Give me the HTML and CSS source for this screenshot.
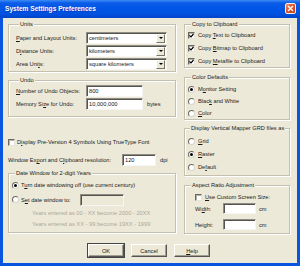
FILE: index.html
```html
<!DOCTYPE html>
<html lang="en">
<head>
    <meta charset="UTF-8">
    <title>System Settings Preferences</title>
    <link rel="stylesheet" href="styles.css">
</head>
<body>
    <div class="window">
        <div class="titlebar">
            <span class="title">System Settings Preferences</span>
            <span class="close">
                <svg width="7" height="7" viewBox="0 0 7 7"><path d="M1 1L6 6M6 1L1 6" stroke="#fff" stroke-width="1.4"/></svg>
            </span>
        </div>
        <div class="frame">
            <div class="columns">
                <div class="col-left">
                    <div class="group units">
                        <div class="group-title">Units</div>
                        <div class="field-row first">
                            <span class="lbl"><u>P</u>aper and Layout Units:</span>
                            <div class="select"><span>centimeters</span><span class="arrow"></span></div>
                        </div>
                        <div class="field-row">
                            <span class="lbl">D<u>i</u>stance Units:</span>
                            <div class="select"><span>kilometers</span><span class="arrow"></span></div>
                        </div>
                        <div class="field-row">
                            <span class="lbl">Area Uni<u>t</u>s:</span>
                            <div class="select"><span>square kilometers</span><span class="arrow"></span></div>
                        </div>
                    </div>

                    <div class="group undo">
                        <div class="group-title">Undo</div>
                        <div class="field-row first">
                            <span class="lbl"><u>N</u>umber of Undo Objects:</span>
                            <div class="input w57">800</div>
                        </div>
                        <div class="field-row">
                            <span class="lbl">Memory Si<u>z</u>e for Undo:</span>
                            <div class="input w57">10,000,000</div>
                            <span class="unit">bytes</span>
                        </div>
                    </div>

                    <div class="check-row symbols">
                        <span class="box"></span>
                        <span>D<u>i</u>splay Pre-Version 4 Symbols Using TrueType Font</span>
                    </div>

                    <div class="field-row resolution">
                        <span class="lbl">Window Ex<u>p</u>ort and C<u>l</u>ipboard resolution:</span>
                        <div class="input w34">120</div>
                        <span class="unit">dpi</span>
                    </div>

                    <div class="group date">
                        <div class="group-title">Date Window for 2-digit Years</div>
                        <div class="check-row first">
                            <span class="radio on"></span>
                            <span>T<u>u</u>rn date windowing off (use current century)</span>
                        </div>
                        <div class="check-row set-row">
                            <span class="radio"></span>
                            <span class="set-lbl">S<u>e</u>t date window to:</span>
                            <div class="input w44 disabled"></div>
                        </div>
                        <div class="gray first-gray">Years entered as 00 - XX become 2000 - 20XX</div>
                        <div class="gray">Years entered as XX - 99 become 19XX - 1999</div>
                    </div>
                </div>

                <div class="col-right">
                    <div class="group clip">
                        <div class="group-title">Copy to Clipboard</div>
                        <div class="check-row first">
                            <span class="box on"><svg width="5" height="5" viewBox="0 0 5 5"><path d="M0.5 2.3L2 3.8L4.5 1" fill="none" stroke="#000" stroke-width="1.2"/></svg></span>
                            <span>Copy <u>T</u>ext to Clipboard</span>
                        </div>
                        <div class="check-row">
                            <span class="box on"><svg width="5" height="5" viewBox="0 0 5 5"><path d="M0.5 2.3L2 3.8L4.5 1" fill="none" stroke="#000" stroke-width="1.2"/></svg></span>
                            <span>Copy <u>B</u>itmap to Clipboard</span>
                        </div>
                        <div class="check-row">
                            <span class="box on"><svg width="5" height="5" viewBox="0 0 5 5"><path d="M0.5 2.3L2 3.8L4.5 1" fill="none" stroke="#000" stroke-width="1.2"/></svg></span>
                            <span>Copy <u>M</u>etafile to Clipboard</span>
                        </div>
                    </div>

                    <div class="group colors">
                        <div class="group-title">Color Defaults</div>
                        <div class="check-row first">
                            <span class="radio on"></span>
                            <span>M<u>o</u>nitor Setting</span>
                        </div>
                        <div class="check-row">
                            <span class="radio"></span>
                            <span>Blac<u>k</u> and White</span>
                        </div>
                        <div class="check-row">
                            <span class="radio"></span>
                            <span><u>C</u>olor</span>
                        </div>
                    </div>

                    <div class="group grd">
                        <div class="group-title">Display Vertical Mapper GRD files as</div>
                        <div class="check-row first">
                            <span class="radio"></span>
                            <span><u>G</u>rid</span>
                        </div>
                        <div class="check-row">
                            <span class="radio on"></span>
                            <span><u>R</u>aster</span>
                        </div>
                        <div class="check-row">
                            <span class="radio"></span>
                            <span>De<u>f</u>ault</span>
                        </div>
                    </div>

                    <div class="group aspect">
                        <div class="group-title">Aspect Ratio Adjustment</div>
                        <div class="check-row first">
                            <span class="box"></span>
                            <span><u>U</u>se Custom Screen Size:</span>
                        </div>
                        <div class="field-row size-row">
                            <span class="lbl">Wi<u>d</u>th:</span>
                            <div class="input w33"></div>
                            <span class="unit">cm</span>
                        </div>
                        <div class="field-row size-row height-row">
                            <span class="lbl">Hei<u>g</u>ht:</span>
                            <div class="input w33"></div>
                            <span class="unit">cm</span>
                        </div>
                    </div>
                </div>
            </div>

            <div class="buttons">
                <div class="btn default">OK</div>
                <div class="btn">Cancel</div>
                <div class="btn"><u>H</u>elp</div>
            </div>
        </div>
    </div>
</body>
</html>
```

FILE: styles.css
```css
* {
    box-sizing: border-box;
}

body {
    margin: 0;
    font-family: "Liberation Sans", Arial, sans-serif;
    font-size: 5.7px;
    color: #1a1a1a;
}

u {
    text-decoration-thickness: 1px;
    text-underline-offset: 1px;
}

.window {
    width: 300px;
    height: 266px;
    display: flex;
    flex-direction: column;
}

.titlebar {
    height: 18px;
    display: flex;
    align-items: center;
    justify-content: space-between;
    padding: 0 4px 1px 5px;
    background: linear-gradient(#3d8bf6 0, #0b5ce8 3px, #0055e6 9px, #0052e0 14px, #0043c9 18px);
}

.title {
    color: #fff;
    font-size: 6.6px;
    font-weight: bold;
    text-shadow: 1px 1px 0 rgba(10, 24, 131, 0.4);
}

.close {
    width: 11px;
    height: 11px;
    display: flex;
    align-items: center;
    justify-content: center;
    border: 1px solid #f4f0ea;
    border-radius: 2px;
    background: linear-gradient(135deg, #f0906a, #e0542a 45%, #c43d14);
}

.frame {
    flex: 1;
    background: #ece9d8;
    border: 3px solid #0a55e0;
    border-top: 0;
    padding: 6px 7px 0 5px;
}

.columns {
    display: flex;
    align-items: flex-start;
    gap: 8px;
}

.col-left {
    width: 168px;
}

.col-right {
    width: 106px;
}

/* group boxes */
.group {
    border: 1px solid #c3c0b0;
    box-shadow: inset 1px 1px 0 #fff, 1px 1px 0 #fff;
}

.group-title {
    width: max-content;
    height: 8px;
    line-height: 8px;
    margin: -5px 0 0 3px;
    padding: 0 1px;
    background: #ece9d8;
    white-space: nowrap;
}

.field-row {
    display: flex;
    align-items: center;
    height: 12px;
}

.field-row + .field-row {
    margin-top: 1px;
}

.check-row {
    display: flex;
    align-items: center;
    gap: 3px;
    height: 12px;
}

.check-row + .check-row {
    margin-top: 1px;
}

/* controls */
.select,
.input {
    height: 12px;
    display: flex;
    align-items: center;
    padding-left: 2px;
    background: #fff;
    border: 1px solid;
    border-color: #8f8d83 #f7f6f2 #f7f6f2 #8f8d83;
    box-shadow: inset 1px 1px 0 #55544e;
    white-space: nowrap;
}

.select {
    width: 81px;
    padding-right: 1px;
}

.select .arrow {
    margin-left: auto;
    width: 9px;
    height: 9px;
    display: flex;
    align-items: center;
    justify-content: center;
    background: #ece9d8;
    border: 1px solid;
    border-color: #fff #77756b #77756b #fff;
}

.select .arrow::after {
    content: "";
    border-left: 2px solid transparent;
    border-right: 2px solid transparent;
    border-top: 2px solid #000;
}

.input.disabled {
    background: #ece9d8;
}

.w57 { width: 57px; }
.w44 { width: 44px; }
.w34 { width: 34px; }
.w33 { width: 33px; }

.unit {
    margin-left: 4px;
}

.box {
    width: 7px;
    height: 7px;
    flex: none;
    display: flex;
    align-items: center;
    justify-content: center;
    background: #fff;
    border: 1px solid;
    border-color: #6b695f #e6e4da #e6e4da #6b695f;
    box-shadow: inset 1px 1px 0 #b4b2a6;
}

.radio {
    width: 7px;
    height: 7px;
    flex: none;
    display: flex;
    align-items: center;
    justify-content: center;
    border-radius: 50%;
    background: #fff;
    border: 1px solid;
    border-color: #6b695f #d8d6cc #d8d6cc #6b695f;
}

.radio.on::after {
    content: "";
    width: 3px;
    height: 3px;
    border-radius: 50%;
    background: #000;
}

.gray {
    height: 11px;
    line-height: 11px;
    margin-left: 20px;
    color: #aca899;
}

/* units */
.units {
    padding: 0 0 1px 7px;
}

.units .first {
    margin-top: 4px;
}

.units .lbl,
.undo .lbl {
    width: 70px;
}

/* undo */
.undo {
    margin-top: 8px;
    padding: 0 0 6px 7px;
}

.undo .first {
    margin-top: 1px;
}

.symbols {
    margin-top: 20px;
    height: 10px;
    gap: 2px;
}

.resolution {
    margin-top: 7px;
}

.resolution .lbl {
    width: 114px;
}

/* date window */
.date {
    margin-top: 7px;
    padding: 0 0 2px 3px;
}

.date .first {
    margin-top: 3px;
    height: 10px;
    gap: 2px;
}

.date .set-row {
    margin-top: 4px;
    height: 11px;
    gap: 2px;
}

.set-lbl {
    width: 57px;
}

.first-gray {
    margin-top: 3px;
}

/* right column */
.clip {
    padding: 0 0 0 3px;
}

.clip .first {
    margin-top: 1px;
}

.colors {
    margin-top: 9px;
    padding: 0 0 0 3px;
}

.colors .first {
    margin-top: 2px;
}

.colors .check-row + .check-row {
    margin-top: 0;
}

.grd {
    margin-top: 8px;
    padding: 0 0 2px 3px;
}

.grd .group-title {
    margin-left: 2px;
}

.grd .first {
    margin-top: 3px;
}

.aspect {
    margin-top: 9px;
    padding: 0 0 3px 10px;
}

.aspect .group-title {
    margin-left: -4px;
}

.aspect .first {
    margin-top: 3px;
    height: 10px;
}

.size-row {
    height: 11px;
}

.size-row .input {
    height: 11px;
}

.aspect .field-row {
    margin-top: 1px;
}

.aspect .height-row {
    margin-top: 5px;
}

.size-row .lbl {
    width: 28px;
}

.size-row .unit {
    margin-left: 3px;
}

/* buttons */
.buttons {
    display: flex;
    justify-content: center;
    gap: 7px;
    margin-top: 10px;
}

.btn {
    width: 36px;
    height: 13px;
    display: flex;
    align-items: center;
    justify-content: center;
    background: #ece9d8;
    border: 1px solid;
    border-color: #fff #555 #555 #fff;
    box-shadow: inset -1px -1px 0 #a19f94;
}

.btn.default {
    outline: 1px solid #444;
}
```
